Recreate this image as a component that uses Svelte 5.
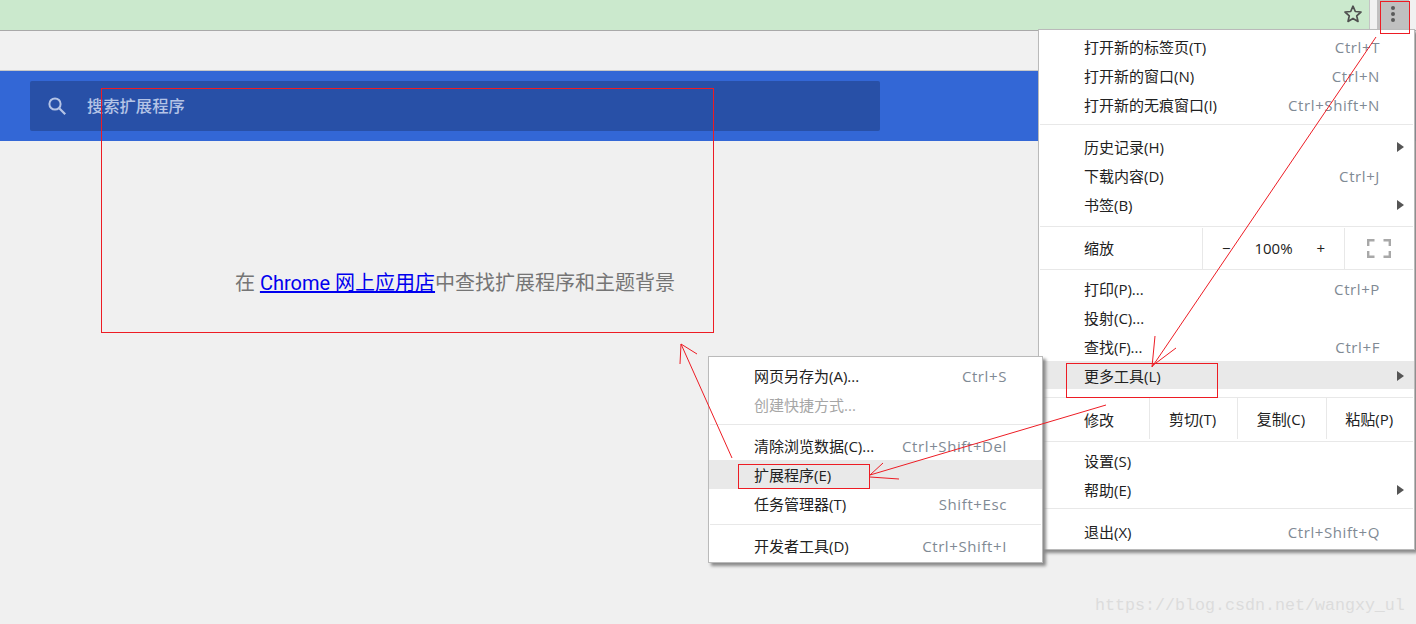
<script lang="ts">
  type Item = { label: string; keys?: string; sub?: boolean; hover?: boolean; off?: boolean };

  const mainTop: Item[] = [
    { label: '打开新的标签页(T)', keys: 'Ctrl+T' },
    { label: '打开新的窗口(N)', keys: 'Ctrl+N' },
    { label: '打开新的无痕窗口(I)', keys: 'Ctrl+Shift+N' }
  ];
  const mainHistory: Item[] = [
    { label: '历史记录(H)', sub: true },
    { label: '下载内容(D)', keys: 'Ctrl+J' },
    { label: '书签(B)', sub: true }
  ];
  const mainTools: Item[] = [
    { label: '打印(P)...', keys: 'Ctrl+P' },
    { label: '投射(C)...' },
    { label: '查找(F)...', keys: 'Ctrl+F' },
    { label: '更多工具(L)', sub: true, hover: true }
  ];
  const mainSettings: Item[] = [
    { label: '设置(S)' },
    { label: '帮助(E)', sub: true }
  ];
  const mainExit: Item[] = [{ label: '退出(X)', keys: 'Ctrl+Shift+Q' }];

  const subFirst: Item[] = [
    { label: '网页另存为(A)...', keys: 'Ctrl+S' },
    { label: '创建快捷方式...', off: true }
  ];
  const subSecond: Item[] = [
    { label: '清除浏览数据(C)...', keys: 'Ctrl+Shift+Del' },
    { label: '扩展程序(E)', hover: true },
    { label: '任务管理器(T)', keys: 'Shift+Esc' }
  ];
  const subThird: Item[] = [{ label: '开发者工具(D)', keys: 'Ctrl+Shift+I' }];
</script>

{#snippet row(item: Item)}
  <div class="row" class:hover={item.hover} class:off={item.off}>
    <span>{item.label}</span>
    {#if item.keys}<span class="keys">{item.keys}</span>{/if}
    {#if item.sub}<span class="caret"></span>{/if}
  </div>
{/snippet}

<div class="page">
  <header class="toolbar">
    <svg class="star" width="20" height="20" viewBox="0 0 20 20">
      <path d="M10 2.2l2.3 5.3 5.7.5-4.3 3.8 1.3 5.6-5-3-5 3 1.3-5.6L2 8l5.7-.5z" fill="none" stroke="#4f4f4f" stroke-width="1.7" stroke-linejoin="round" />
    </svg>
    <div class="gap"></div>
    <div class="dots"><i></i><i></i><i></i></div>
  </header>
  <div class="strip"></div>
  <div class="banner">
    <div class="search">
      <svg width="20" height="20" viewBox="0 0 20 20">
        <circle cx="8" cy="8" r="5.6" fill="none" stroke="#b5c4e6" stroke-width="2" />
        <path d="M12.2 12.2l6 6" stroke="#b5c4e6" stroke-width="2.2" />
      </svg>
      <span>搜索扩展程序</span>
    </div>
  </div>
  <p class="empty">在 <a href="#store">Chrome 网上应用店</a>中查找扩展程序和主题背景</p>
</div>

<div class="menu main-menu">
  {#each mainTop as item}{@render row(item)}{/each}
  <hr class="h1" />
  {#each mainHistory as item}{@render row(item)}{/each}
  <hr class="h2" />
  <div class="tool-row zoom-row">
    <span class="tool-label">缩放</span>
    <div class="zoom-ctl"><span>−</span><span>100%</span><span>+</span></div>
    <div class="full">
      <svg width="24" height="19" viewBox="0 0 24 19">
        <path d="M1.2 7V1.2H7.5M16.5 1.2h6.3V7M22.8 12v5.800h-6.300M7.500 17.800H1.200V12" fill="none" stroke="#a8a8a8" stroke-width="2.400" />
      </svg>
    </div>
  </div>
  <hr class="h3" />
  {#each mainTools as item}{@render row(item)}{/each}
  <hr class="h4" />
  <div class="tool-row edit-row">
    <span class="tool-label">修改</span>
    <span class="cell">剪切(T)</span>
    <span class="cell">复制(C)</span>
    <span class="cell">粘贴(P)</span>
  </div>
  <hr class="h5" />
  {#each mainSettings as item}{@render row(item)}{/each}
  <hr class="h6" />
  {#each mainExit as item}{@render row(item)}{/each}
</div>

<div class="menu sub-menu">
  {#each subFirst as item}{@render row(item)}{/each}
  <hr class="s1" />
  {#each subSecond as item}{@render row(item)}{/each}
  <hr class="s2" />
  {#each subThird as item}{@render row(item)}{/each}
</div>

<div class="mark">https://blog.csdn.net/wangxy_ul</div>

<svg class="notes" width="1416" height="624" viewBox="0 0 1416 624">
  <g fill="none" stroke="#ed1c24" stroke-width="1">
    <rect x="101.5" y="88.5" width="612" height="244" />
    <rect x="1380.5" y="1.5" width="29" height="32" />
    <rect x="1066.5" y="363.5" width="151" height="34" />
    <rect x="738.5" y="464.5" width="131" height="24" />
    <path d="M1376 37L1152 367M1155 336L1152 367M1176 348L1152 366" />
    <path d="M1106 405L870 475M883 463L870 475M899 479L870 477" />
    <path d="M732 458L681 344M680 364L681 344M697 354L681 344" />
  </g>
</svg>

<style>
  :global(body) {
    background: #f0f0f0;
    overflow: hidden;
  }
  .page {
    height: 624px;
    font-family: Roboto, "Noto Sans CJK SC", sans-serif;
  }
  .toolbar {
    height: 30px;
    background: #cbe9cd;
    border-bottom: 1px solid #a9a9a9;
    display: flex;
    align-items: center;
    justify-content: flex-end;
  }
  .star { margin-right: 6px; margin-top: -2px; }
  .gap {
    width: 7px;
    height: 100%;
    background: #f1f1f1;
    border-left: 1px solid #c4c4c4;
  }
  .dots {
    width: 39px;
    height: 100%;
    padding-right: 7px;
    background: linear-gradient(90deg, #c0c0c0 32px, #f1f1f1 32px);
    display: flex;
    flex-direction: column;
    align-items: center;
    padding-top: 6px;
    box-sizing: border-box;
    gap: 2px;
  }
  .dots i {
    width: 4px;
    height: 4px;
    border-radius: 50%;
    background: #5a5a5a;
  }
  .strip {
    height: 39px;
    background: #f1f1f1;
    border-bottom: 1px solid #c8c8c8;
  }
  .banner {
    height: 70px;
    background: #3367d6;
    padding: 10px 30px;
    box-sizing: border-box;
  }
  .search {
    width: 850px;
    height: 50px;
    background: #2850a7;
    border-radius: 2px;
    display: flex;
    align-items: center;
    padding-left: 17px;
    box-sizing: border-box;
    gap: 20px;
    color: #b5c4e6;
    font-size: 16.3px;
    font-weight: 500;
  }
  .search span { margin-top: -2px; }
  .empty {
    width: 850px;
    margin: 130px 0 0 30px;
    text-align: center;
    font-size: 20px;
    line-height: 24px;
    color: #757575;
  }
  .empty a { color: #0000ee; }
  .menu {
    position: absolute;
    box-sizing: border-box;
    background: #fff;
    border: 1px solid #bababa;
    box-shadow: 3px 3px 3px #8a8a8a;
    font-family: "Open Sans", "Noto Sans CJK SC", sans-serif;
    font-size: 15px;
    color: #212121;
  }
  .main-menu { left: 1038px; top: 29px; width: 377px; padding: 2px 0 3px; }
  .sub-menu { left: 708px; top: 356px; width: 335px; padding: 4px 0 2px; }
  .row {
    position: relative;
    height: 29px;
    display: flex;
    align-items: center;
    justify-content: space-between;
    padding-left: 45px;
    padding-right: 34px;
  }
  .sub-menu .row { padding-right: 35px; }
  .row.hover { background: #e9e9e9; }
  .main-menu .row.hover { height: 28px; }
  .row.off { color: #a6a6a6; }
  .keys { color: #7f8a94; letter-spacing: 0.6px; }
  .caret {
    position: absolute;
    right: 10px;
    top: 10px;
    border-left: 7px solid #555;
    border-top: 5px solid transparent;
    border-bottom: 5px solid transparent;
  }
  hr {
    border: 0;
    height: 1px;
    background: #e8e8e8;
    margin: 0 1px;
  }
  hr.h1 { margin-top: 5px; margin-bottom: 7px; }
  hr.h2 { margin-top: 7px; }
  hr.h3 { margin-bottom: 4px; }
  hr.h4 { margin-top: 8px; }
  hr.h5 { margin-bottom: 4px; }
  hr.h6 { margin-top: 4px; margin-bottom: 8px; }
  hr.s1 { margin-top: 5px; margin-bottom: 6px; }
  hr.s2 { margin-top: 6px; margin-bottom: 6px; }
  .tool-row {
    display: flex;
    align-items: center;
  }
  .zoom-row { height: 42px; }
  .edit-row { height: 43px; }
  .tool-label { padding-left: 45px; }
  .zoom-row .tool-label { width: 163px; box-sizing: border-box; margin-top: -2px; }
  .zoom-ctl {
    width: 143px;
    height: 41px;
    box-sizing: border-box;
    border-left: 1px solid #e8e8e8;
    border-right: 1px solid #e8e8e8;
    display: flex;
    align-items: center;
    justify-content: space-between;
    padding: 0 19px;
  }
  .full {
    flex: 1;
    display: flex;
    justify-content: center;
    padding-right: 1px;
  }
  .edit-row .tool-label { width: 110px; box-sizing: border-box; }
  .cell {
    height: 41px;
    align-self: flex-start;
    box-sizing: border-box;
    border-left: 1px solid #e8e8e8;
    display: flex;
    align-items: center;
    justify-content: center;
    width: 88.5px;
    padding-right: 2px;
  }
  .mark {
    position: absolute;
    left: 1095px;
    top: 596px;
    font-family: "Liberation Mono", monospace;
    font-size: 16.67px;
    line-height: 20px;
    color: #dcdcdc;
  }
  .notes {
    position: absolute;
    left: 0;
    top: 0;
    pointer-events: none;
  }
</style>
